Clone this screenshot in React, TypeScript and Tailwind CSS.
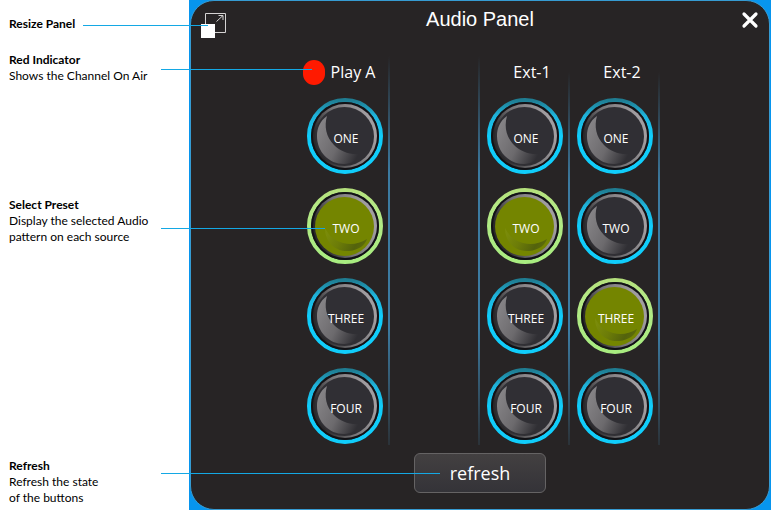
import React from "react";

type Preset = "ONE" | "TWO" | "THREE" | "FOUR";

const presets: Preset[] = ["ONE", "TWO", "THREE", "FOUR"];

interface Source {
  name: string;
  selected: Preset;
  onAir?: boolean;
}

function KnobArt({ id, selected }: { id: string; selected: boolean }) {
  return (
    <svg viewBox="0 0 76 76" className="absolute inset-0 size-full" aria-hidden="true">
      <defs>
        <linearGradient id={`${id}-ring`} x1="0" y1="0" x2="0" y2="1">
          <stop offset="0" stopColor={selected ? "#b4e07c" : "#1f7d92"} />
          <stop offset="0.22" stopColor={selected ? "#b4e885" : "#1fb4dc"} />
          <stop offset="0.5" stopColor={selected ? "#b0ea84" : "#10cdfb"} />
          <stop offset="1" stopColor={selected ? "#a8ec80" : "#10cdfb"} />
        </linearGradient>
        <linearGradient id={`${id}-rim`} x1="0.1" y1="0.65" x2="0.9" y2="0.35">
          <stop offset="0" stopColor="#2a292b" />
          <stop offset="0.45" stopColor="#767477" />
          <stop offset="1" stopColor="#a09da0" />
        </linearGradient>
        <linearGradient id={`${id}-moon`} x1="0" y1="0.3" x2="1" y2="0.85">
          <stop offset="0" stopColor="#858386" />
          <stop offset="0.5" stopColor="#6c6a6d" />
          <stop offset="0.95" stopColor="#302f34" />
        </linearGradient>
        <linearGradient id={`${id}-shade`} x1="0" y1="0.3" x2="1" y2="0.6">
          <stop offset="0" stopColor="#7b8c0a" />
          <stop offset="0.4" stopColor="#6c7c08" />
          <stop offset="0.8" stopColor="#53620c" />
          <stop offset="1" stopColor="#5c6b0a" />
        </linearGradient>
      </defs>
      <circle cx="38" cy="38" r="36" fill="#222126" stroke={`url(#${id}-ring)`} strokeWidth="4" />
      <circle cx="38" cy="38" r="34" fill="#121216" />
      <circle cx="38" cy="38" r="32" fill={`url(#${id}-rim)`} />
      <circle cx="37.500" cy="38.500" r="29.500" fill={selected ? "#748500" : "#302f34"} />
      {selected ? (
        <path
          d="M18 40 C18 55 29 64 42 63 C52 62 58 57 60 51 C52 56 44 57 36 55 C28 53 22 48 18 40Z"
          fill={`url(#${id}-shade)`}
        />
      ) : (
        <path
          d="M20 18 C13 23 10 30 10 38 C10 54 22 66 37 66 C44 66 50 62 53 56 C42 57 33 53 27 47 C19 39 17 28 20 18Z"
          fill={`url(#${id}-moon)`}
        />
      )}
    </svg>
  );
}

function PresetButton({ source, preset, selected }: { source: string; preset: Preset; selected: boolean }) {
  const id = `${source}-${preset}`.replace(" ", "");
  return (
    <button
      type="button"
      aria-pressed={selected}
      className="relative flex size-[76px] items-center justify-center rounded-full text-xs text-white"
    >
      <KnobArt id={id} selected={selected} />
      <span className="relative pt-[6px] pl-[2px]">{preset}</span>
    </button>
  );
}

function SourceColumn({ source }: { source: Source }) {
  return (
    <section className="flex w-[90px] flex-col items-center">
      <h2
        className={
          "flex h-8 items-center gap-[6px] text-base whitespace-nowrap text-white " +
          (source.onAir ? "pr-3" : "pl-[14px]")
        }
      >
        {source.onAir && <span className="h-[25px] w-[22px] shrink-0 rounded-full bg-[#ff1a00]" />}
        {source.name}
      </h2>
      <div className="mt-[10px] flex flex-col gap-[14px]">
        {presets.map((preset) => (
          <PresetButton key={preset} source={source.name} preset={preset} selected={preset === source.selected} />
        ))}
      </div>
    </section>
  );
}

function Divider({ thin }: { thin?: boolean }) {
  return (
    <div
      className={
        "-ml-[2px] w-[2px] bg-[linear-gradient(to_bottom,transparent,#3c7ba1_30%,#3c7ba1_70%,#2b3238)] " +
        (thin ? "mt-4" : "")
      }
    />
  );
}

interface NoteProps {
  title: string;
  lines?: string[];
  className: string;
  leader: string;
}

function Note({ title, lines = [], className, leader }: NoteProps) {
  return (
    <div className={"relative pl-[9px] text-xs leading-4 text-black " + className}>
      <h3 className="font-bold">{title}</h3>
      {lines.map((line) => (
        <p key={line} className="whitespace-nowrap">{line}</p>
      ))}
      <span className={"absolute z-10 h-px bg-[#14a8e4] " + leader} />
    </div>
  );
}

export default function App() {
  return (
    <main className="flex min-h-screen bg-white font-['Open_Sans','Noto_Sans',sans-serif]">
      <aside className="w-[189px] shrink-0 font-['Lato','Open_Sans',sans-serif]">
        <Note title="Resize Panel" className="pt-4" leader="top-[25px] left-[83px] w-[125px]" />
        <Note
          title="Red Indicator"
          lines={["Shows the Channel On Air"]}
          className="mt-5"
          leader="top-[17px] left-[161px] w-[151px]"
        />
        <Note
          title="Select Preset"
          lines={["Display the selected Audio", "pattern on each source"]}
          className="mt-[113px]"
          leader="top-[31px] left-[161px] w-[164px]"
        />
        <Note
          title="Refresh"
          lines={["Refresh the state", "of the buttons"]}
          className="mt-[213px]"
          leader="top-[15px] left-[161px] w-[279px]"
        />
      </aside>

      <div className="flex grow bg-[#0795ee] px-px">
        <div className="flex grow flex-col items-center rounded-3xl border border-[#369bd2] bg-[#272425]">
          <header className="grid w-full grid-cols-[1fr_auto_1fr] items-start px-[10px]">
            <button type="button" aria-label="Resize panel" className="mt-[11px] size-[26px]">
              <svg viewBox="0 0 26 26" className="size-full" fill="none" aria-hidden="true">
                <path d="M4.500 1.500H24.500V20.500H4.500Z" stroke="#d5d3d3" />
                <path d="M15.500 9.500L22 3.500M17.500 3.500H22V8" stroke="#d5d3d3" />
                <rect x="0" y="12" width="14" height="14" fill="#fff" />
              </svg>
            </button>
            <h1 className="pt-1 font-['Liberation_Sans',Arial,sans-serif] text-xl leading-7 text-white">Audio Panel</h1>
            <button type="button" aria-label="Close" className="mt-[10px] size-[18px] justify-self-end">
              <svg viewBox="0 0 18 18" className="size-full" aria-hidden="true">
                <path d="M3 3L15 15M15 3L3 15" stroke="#fff" strokeWidth="3.200" strokeLinecap="round" />
              </svg>
            </button>
          </header>

          <div className="mt-[18px] flex h-[389px]">
            <SourceColumn source={{ name: "Play A", selected: "TWO", onAir: true }} />
            <Divider />
            <div className="w-[90px]" />
            <Divider />
            <SourceColumn source={{ name: "Ext-1", selected: "TWO" }} />
            <Divider thin />
            <SourceColumn source={{ name: "Ext-2", selected: "THREE" }} />
            <Divider thin />
          </div>

          <button
            type="button"
            className="mt-2 h-10 w-[132px] rounded-md border border-[#656364] bg-linear-to-b from-[#434041] to-[#343338] text-lg leading-6 text-white"
          >
            refresh
          </button>
        </div>
      </div>
    </main>
  );
}
